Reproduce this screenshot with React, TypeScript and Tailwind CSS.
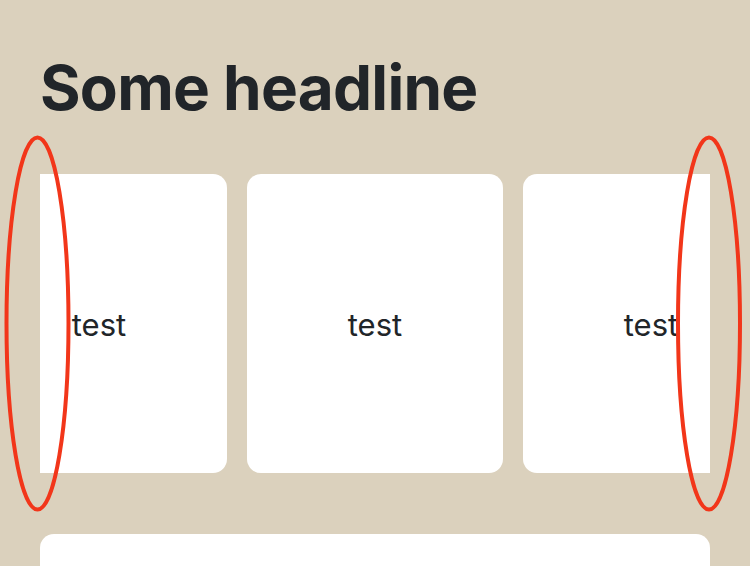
import React from 'react';

const cards = ['test', 'test', 'test'];

export default function App() {
  return (
    <div className="relative h-[566px] overflow-hidden bg-[#dbd1bd] px-10 pt-[51px] font-['Inter',sans-serif] text-[#212529]">
      <h1 className="text-[62px] font-bold leading-[1.2] tracking-[-0.012em]">Some headline</h1>

      {/* Carousel, scrolled so the first card is cut off */}
      <div className="mt-[49px] overflow-hidden">
        <div className="-ml-[69px] flex gap-5">
          {cards.map((c, i) => (
            <div
              key={i}
              className="flex h-[299px] w-[256px] shrink-0 items-center justify-center rounded-[14px] bg-white pt-[2px] text-[31px]"
            >
              {c}
            </div>
          ))}
        </div>
      </div>

      <div className="mt-[61px] h-[32px] rounded-t-[14px] bg-white" />

      {/* Annotation marks */}
      <svg className="pointer-events-none absolute left-0 top-0" width="750" height="566">
        <ellipse cx="37.5" cy="323.5" rx="31" ry="186" fill="none" stroke="#f2361a" strokeWidth="4" />
        <ellipse cx="709" cy="323.5" rx="31" ry="186" fill="none" stroke="#f2361a" strokeWidth="4" />
      </svg>
    </div>
  );
}
